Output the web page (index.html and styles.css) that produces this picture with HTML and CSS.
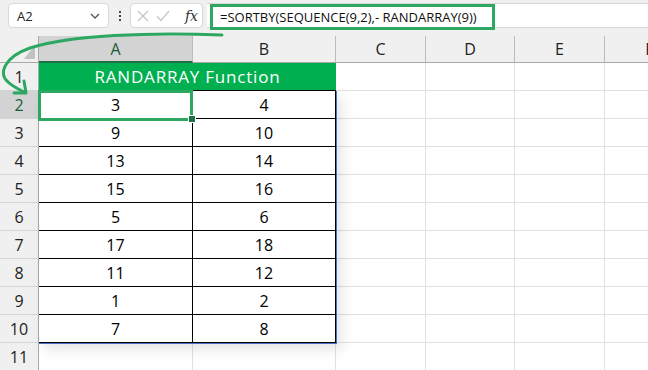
FILE: index.html
```html
<!DOCTYPE html>
<html>
<head>
  <meta charset="utf-8">
  <title>RANDARRAY Function</title>
  <link rel="stylesheet" href="styles.css">
</head>
<body>
  <div class="app">
    <div class="toolbar">
      <div class="namebox">
        <span>A2</span>
        <svg class="chevron" viewBox="0 0 10 6"><path d="M1 1L5 5L9 1"/></svg>
      </div>
      <div class="dots"><span></span><span></span><span></span></div>
      <div class="fxbox">
        <svg class="icon" viewBox="0 0 12 12"><path d="M1 1L11 11M11 1L1 11"/></svg>
        <svg class="icon check" viewBox="0 0 14 12"><path d="M1 6.5L5 10.5L13 1"/></svg>
        <span class="fx">fx</span>
      </div>
      <div class="formula">
        <span class="formula-text">=SORTBY(SEQUENCE(9,2),- RANDARRAY(9))</span>
      </div>
    </div>

    <div class="sheet">
      <div class="corner"><span class="select-all"></span></div>
      <div class="colhead active">A</div>
      <div class="colhead">B</div>
      <div class="colhead">C</div>
      <div class="colhead">D</div>
      <div class="colhead">E</div>
      <div class="colhead">F</div>

      <div class="rowhead">1</div>
      <div class="title">RANDARRAY Function</div>
      <div class="cell"></div><div class="cell"></div><div class="cell"></div><div class="cell"></div>

      <div class="rowhead active">2</div>
      <div class="cell t selected">3</div><div class="cell t">4</div>
      <div class="cell"></div><div class="cell"></div><div class="cell"></div><div class="cell"></div>

      <div class="rowhead">3</div>
      <div class="cell t">9</div><div class="cell t">10</div>
      <div class="cell"></div><div class="cell"></div><div class="cell"></div><div class="cell"></div>

      <div class="rowhead">4</div>
      <div class="cell t">13</div><div class="cell t">14</div>
      <div class="cell"></div><div class="cell"></div><div class="cell"></div><div class="cell"></div>

      <div class="rowhead">5</div>
      <div class="cell t">15</div><div class="cell t">16</div>
      <div class="cell"></div><div class="cell"></div><div class="cell"></div><div class="cell"></div>

      <div class="rowhead">6</div>
      <div class="cell t">5</div><div class="cell t">6</div>
      <div class="cell"></div><div class="cell"></div><div class="cell"></div><div class="cell"></div>

      <div class="rowhead">7</div>
      <div class="cell t">17</div><div class="cell t">18</div>
      <div class="cell"></div><div class="cell"></div><div class="cell"></div><div class="cell"></div>

      <div class="rowhead">8</div>
      <div class="cell t">11</div><div class="cell t">12</div>
      <div class="cell"></div><div class="cell"></div><div class="cell"></div><div class="cell"></div>

      <div class="rowhead">9</div>
      <div class="cell t">1</div><div class="cell t">2</div>
      <div class="cell"></div><div class="cell"></div><div class="cell"></div><div class="cell"></div>

      <div class="rowhead">10</div>
      <div class="cell t">7</div><div class="cell t">8</div>
      <div class="cell"></div><div class="cell"></div><div class="cell"></div><div class="cell"></div>

      <div class="rowhead">11</div>
      <div class="cell"></div><div class="cell"></div>
      <div class="cell"></div><div class="cell"></div><div class="cell"></div><div class="cell"></div>

      <div class="spill"></div>
    </div>

    <svg class="arrow" viewBox="0 0 648 370">
      <path d="M222 35 C150 32 70 35 30 48 C4 57 -2 74 8 82 C12 86 18 89 24 92"/>
      <path d="M14 93 L26 93 L24 81"/>
    </svg>
  </div>
</body>
</html>
```

FILE: styles.css
```css
* {
  box-sizing: border-box;
}
body {
  margin: 0;
  font-family: "Open Sans", sans-serif;
  background: #fff;
}
.app {
  position: relative;
  width: 648px;
  height: 370px;
  overflow: hidden;
}

/* top bar */
.toolbar {
  display: flex;
  align-items: flex-start;
  height: 36px;
  padding: 3px 0 0 8px;
  background: #f0f0f0;
}
.namebox {
  width: 101px;
  height: 25px;
  background: #fff;
  border: 1px solid #d9d9d9;
  border-radius: 4px;
  display: flex;
  align-items: center;
  justify-content: space-between;
  padding: 0 8px 0 8px;
  font-size: 13px;
  color: #222;
}
.chevron {
  width: 10px;
  height: 6px;
  fill: none;
  stroke: #555;
  stroke-width: 1.3;
}
.dots {
  width: 21px;
  height: 25px;
  display: flex;
  flex-direction: column;
  align-items: center;
  justify-content: center;
  gap: 2px;
}
.dots span {
  width: 2px;
  height: 2px;
  background: #444;
}
.fxbox {
  width: 73px;
  height: 25px;
  background: #fff;
  border: 1px solid #d9d9d9;
  border-radius: 4px;
  display: flex;
  align-items: center;
  gap: 7px;
  padding: 0 4px 0 6px;
}
.icon {
  width: 12px;
  height: 12px;
  fill: none;
  stroke: #c4c4c4;
  stroke-width: 1.2;
}
.icon.check {
  width: 14px;
}
.fx {
  margin-left: auto;
  font-family: "DejaVu Serif", serif;
  font-style: italic;
  font-size: 14px;
  color: #333;
}
.formula {
  flex: 1;
  height: 25px;
  margin-left: 4px;
  padding-left: 3px;
  background: #fff;
  border-top: 1px solid #d6d6d6;
  border-bottom: 1px solid #d6d6d6;
}
.formula-text {
  display: inline-flex;
  align-items: center;
  width: 285px;
  height: 26px;
  padding-left: 7px;
  border: 3px solid #2ca862;
  font-size: 13px;
  color: #111;
  white-space: nowrap;
}

/* sheet */
.sheet {
  position: relative;
  display: grid;
  grid-template-columns: 39px 154px 143px 90px 89px 90px 90px;
  grid-template-rows: 27px repeat(11, 28px);
}
.corner {
  display: flex;
  align-items: flex-end;
  justify-content: flex-end;
  padding: 0 3px 3px 0;
  background: #f0f0f0;
  border-right: 1px solid #a8a8a8;
  border-bottom: 1px solid #a8a8a8;
}
.select-all {
  width: 11px;
  height: 14px;
  background: #c2c2c2;
  clip-path: polygon(100% 0, 100% 100%, 0 100%);
}
.colhead {
  display: flex;
  align-items: center;
  justify-content: center;
  background: #f0f0f0;
  border-right: 1px solid #bcbcbc;
  border-bottom: 1px solid #a8a8a8;
  font-size: 16px;
  color: #222;
}
.colhead.active {
  background: #d3d3d3;
  border-bottom: 2px solid #1e7145;
  color: #185c37;
}
.rowhead {
  display: flex;
  align-items: center;
  justify-content: center;
  background: #f0f0f0;
  border-right: 1px solid #a8a8a8;
  border-bottom: 1px solid #d4d4d4;
  font-size: 16px;
  color: #222;
}
.rowhead.active {
  background: #d3d3d3;
  color: #185c37;
}
.cell {
  display: flex;
  align-items: center;
  justify-content: center;
  border-right: 1px solid #e1e1e1;
  border-bottom: 1px solid #e1e1e1;
  font-size: 16px;
  color: #000;
}
.cell.t {
  border-right-color: #000;
  border-bottom-color: #000;
}
.title {
  grid-column: span 2;
  display: flex;
  align-items: center;
  justify-content: center;
  background: #00b050;
  border-bottom: 1px solid #000;
  color: #fff;
  font-size: 17px;
  letter-spacing: 0.8px;
}
.cell.selected {
  position: relative;
}
.cell.selected::before {
  content: "";
  position: absolute;
  inset: -1px -1px -3px -1px;
  border: 3px solid #2ca862;
}
.cell.selected::after {
  content: "";
  position: absolute;
  right: -4px;
  bottom: -5px;
  width: 6px;
  height: 6px;
  background: #1e7145;
  border: 1px solid #fff;
}
.spill {
  position: absolute;
  left: 39px;
  top: 55px;
  width: 298px;
  height: 253px;
  border-right: 1px solid #4472c4;
  border-bottom: 1px solid #4472c4;
  box-shadow: 5px 6px 12px rgba(0, 0, 0, 0.1);
  pointer-events: none;
}

/* annotation arrow */
.arrow {
  position: absolute;
  left: 0;
  top: 0;
  width: 648px;
  height: 370px;
  fill: none;
  stroke: #2ca862;
  stroke-width: 3;
  stroke-linecap: round;
  stroke-linejoin: round;
  pointer-events: none;
}
```
